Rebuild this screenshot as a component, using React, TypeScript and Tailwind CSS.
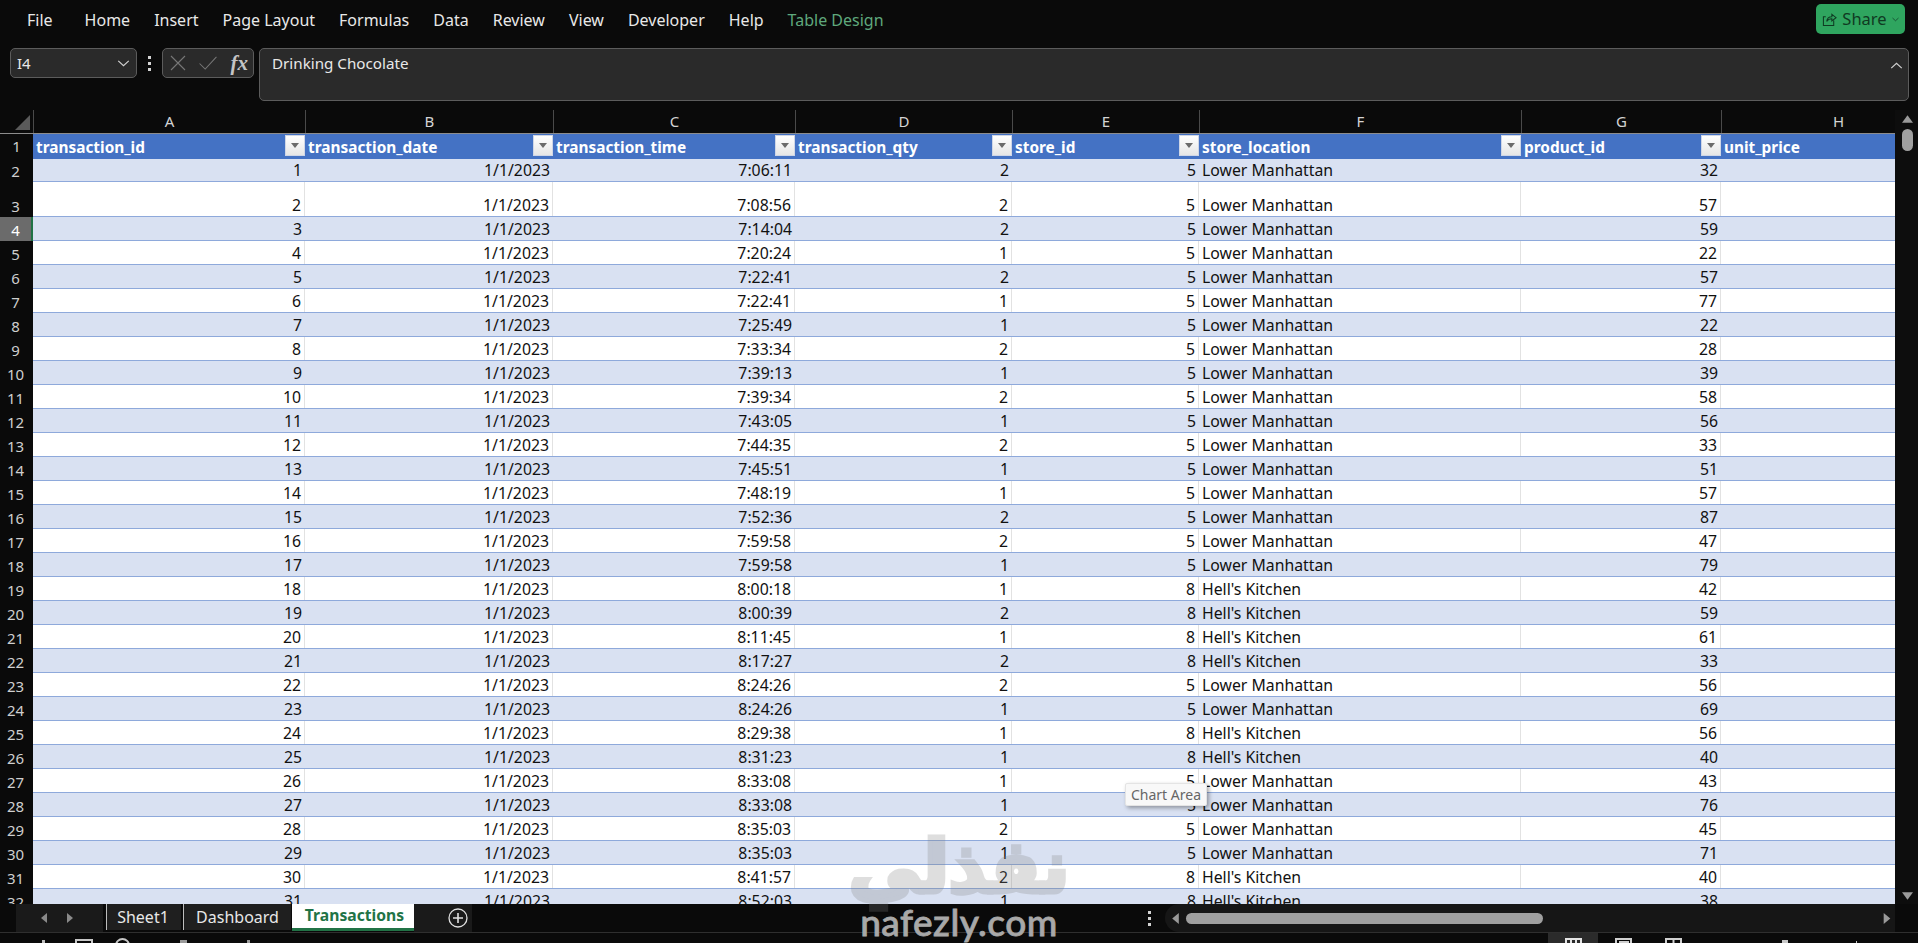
import React from "react";

type Row = [number, string, number, number, string, number];
const L = "Lower Manhattan";
const H = "Hell's Kitchen";
const data: Row[] = [
  [1, "7:06:11", 2, 5, L, 32],
  [2, "7:08:56", 2, 5, L, 57],
  [3, "7:14:04", 2, 5, L, 59],
  [4, "7:20:24", 1, 5, L, 22],
  [5, "7:22:41", 2, 5, L, 57],
  [6, "7:22:41", 1, 5, L, 77],
  [7, "7:25:49", 1, 5, L, 22],
  [8, "7:33:34", 2, 5, L, 28],
  [9, "7:39:13", 1, 5, L, 39],
  [10, "7:39:34", 2, 5, L, 58],
  [11, "7:43:05", 1, 5, L, 56],
  [12, "7:44:35", 2, 5, L, 33],
  [13, "7:45:51", 1, 5, L, 51],
  [14, "7:48:19", 1, 5, L, 57],
  [15, "7:52:36", 2, 5, L, 87],
  [16, "7:59:58", 2, 5, L, 47],
  [17, "7:59:58", 1, 5, L, 79],
  [18, "8:00:18", 1, 8, H, 42],
  [19, "8:00:39", 2, 8, H, 59],
  [20, "8:11:45", 1, 8, H, 61],
  [21, "8:17:27", 2, 8, H, 33],
  [22, "8:24:26", 2, 5, L, 56],
  [23, "8:24:26", 1, 5, L, 69],
  [24, "8:29:38", 1, 8, H, 56],
  [25, "8:31:23", 1, 8, H, 40],
  [26, "8:33:08", 1, 5, L, 43],
  [27, "8:33:08", 1, 5, L, 76],
  [28, "8:35:03", 2, 5, L, 45],
  [29, "8:35:03", 1, 5, L, 71],
  [30, "8:41:57", 2, 8, H, 40],
  [31, "8:52:03", 1, 8, H, 38],
];

const gridCols = "grid grid-cols-[33px_272px_248px_242px_217px_187px_322px_200px_174px]";
const menu = ["Home", "Insert", "Page Layout", "Formulas", "Data", "Review", "View", "Developer", "Help"];
const letters = ["A", "B", "C", "D", "E", "F", "G", "H"];
const heads = ["transaction_id", "transaction_date", "transaction_time", "transaction_qty", "store_id", "store_location", "product_id", "unit_price"];

function Chevron({ className }: { className?: string }) {
  return (
    <svg viewBox="0 0 14 8" className={className} fill="none" stroke="currentColor" strokeWidth="1.4">
      <path d="M1 1l6 5.5L13 1" />
    </svg>
  );
}

function Dots() {
  return (
    <div className="flex flex-col gap-[3px]">
      <div className="w-[3px] h-[3px] bg-[#d4d4d4]" />
      <div className="w-[3px] h-[3px] bg-[#d4d4d4]" />
      <div className="w-[3px] h-[3px] bg-[#d4d4d4]" />
    </div>
  );
}

function Filter() {
  return (
    <div className="absolute right-0 top-[1px] w-[20px] h-[21px] bg-gradient-to-b from-white to-[#e6e6e6] border border-[#cfd6e6] flex items-center justify-center">
      <svg viewBox="0 0 8 5" className="w-[8px] h-[5px]"><path d="M0 0h8L4 5z" fill="#6b6b6b" /></svg>
    </div>
  );
}

function Num({ v, sep }: { v: React.ReactNode; sep: boolean }) {
  return (
    <div className={`flex items-end justify-end pr-[3px] overflow-hidden ${sep ? "border-r border-[#e2e2e2]" : ""}`}>{v}</div>
  );
}

function DataRow({ r, idx }: { r: Row; idx: number }) {
  const n = idx + 2;
  const striped = idx % 2 === 0;
  const tall = n === 3;
  const selected = n === 4;
  return (
    <div className={`${gridCols} ${tall ? "h-[35px]" : "h-[24px]"} shrink-0`}>
      <div className={`flex items-end justify-center text-[15px] leading-[22px] border-r-2 ${selected ? "bg-[#6b6b6b] text-white border-[#217346]" : "bg-[#0a0a0a] text-[#cfcfcf] border-[#0a0a0a]"}`}>
        {n}
      </div>
      <div className={`col-span-8 grid grid-cols-subgrid border-b leading-[21px] ${striped ? "bg-[#d9e1f2]" : "bg-white"} border-[#8ea9db] text-[#111]`}>
        <Num v={r[0]} sep={!striped} />
        <Num v="1/1/2023" sep={!striped} />
        <Num v={r[1]} sep={!striped} />
        <Num v={r[2]} sep={!striped} />
        <Num v={r[3]} sep={!striped} />
        <div className={`flex items-end pl-[3px] ${striped ? "" : "border-r border-[#e2e2e2]"}`}>{r[4]}</div>
        <Num v={r[5]} sep={!striped} />
        <div />
      </div>
    </div>
  );
}

export default function App() {
  return (
    <div className="relative w-[1918px] h-[943px] overflow-hidden bg-[#0a0a0a] flex flex-col font-['Noto_Sans',sans-serif] text-[#e8e8e8]">
      {/* menu */}
      <div className="h-[48px] shrink-0 flex items-start justify-between pl-[27px] pr-[13px]">
        <div className="flex items-center h-[40px] text-[16px] gap-6">
          <span className="mr-2">File</span>
          {menu.map((m) => <span key={m}>{m}</span>)}
          <span className="text-[#5fa87c]">Table Design</span>
        </div>
        <div className="mt-[4px] w-[89px] h-[30px] rounded-[5px] bg-[#2fa55f] flex items-center justify-center gap-[5px] text-[#0f3a22] text-[16.5px]">
          <svg viewBox="0 0 16 16" className="w-[15px] h-[15px] shrink-0" fill="none" stroke="currentColor" strokeWidth="1.1">
            <path d="M4 5H1.5v9.5h11V9M5 10c.4-3.2 2.4-5 5.5-5V2.5L15 6l-4.5 3.5V7.2C8 7.2 6.3 8 5 10z" />
          </svg>
          <span>Share</span>
          <Chevron className="w-[7px] h-[5px] shrink-0" />
        </div>
      </div>

      {/* formula bar */}
      <div className="h-[62px] shrink-0 flex items-start pl-[10px] pr-[9px]">
        <div className="w-[127px] h-[30px] rounded-[5px] border border-[#5c5c5c] bg-[#2a2a2a] flex items-center justify-between pl-[6px] pr-[6px] text-[15px]">
          <span>I4</span>
          <Chevron className="w-[13px] h-[7px] text-[#d0d0d0]" />
        </div>
        <div className="w-[25px] h-[30px] flex items-center justify-center"><Dots /></div>
        <div className="w-[92px] h-[30px] rounded-[5px] border border-[#5c5c5c] bg-[#2a2a2a] flex items-center pl-[7px] pr-[5px] justify-between">
          <svg viewBox="0 0 16 16" className="w-[16px] h-[16px]" fill="none" stroke="#777" strokeWidth="1.1"><path d="M1 1l14 14M15 1L1 15" /></svg>
          <svg viewBox="0 0 20 16" className="w-[20px] h-[15px]" fill="none" stroke="#777" strokeWidth="1.1"><path d="M1 8l6 6L19 1" /></svg>
          <span className="font-['Liberation_Serif',serif] italic font-bold text-[21px] text-[#c4c4c4] leading-none">fx</span>
        </div>
        <div className="ml-[5px] flex-1 h-[53px] rounded-[5px] border border-[#5c5c5c] bg-[#2a2a2a] flex items-start justify-between pl-[12px] pr-[5px] pt-[3px] text-[15.2px]">
          <span>Drinking Chocolate</span>
          <Chevron className="mt-[10px] w-[13px] h-[7px] rotate-180 text-[#d0d0d0]" />
        </div>
      </div>

      {/* sheet */}
      <div className="h-[794px] shrink-0 flex overflow-hidden text-[15.8px]">
        <div className="w-[1895px] flex flex-col overflow-hidden">
          <div className={`${gridCols} h-[24px] shrink-0 border-b border-[#8c8c8c] text-[#d4d4d4] text-[15px]`}>
            <div className="flex items-end justify-end pr-[3px] pb-[3px]">
              <svg viewBox="0 0 16 16" className="w-[15px] h-[15px]"><path d="M16 0v16H0z" fill="#5a5a5a" /></svg>
            </div>
            {letters.map((c) => (
              <div key={c} className={`flex items-center justify-center border-l border-[#4a4a4a] ${c === "H" ? "pl-[60px]" : ""}`}>{c}</div>
            ))}
          </div>
          <div className={`${gridCols} h-[24px] shrink-0`}>
            <div className="flex items-center justify-center text-[15px] text-[#cfcfcf]">1</div>
            {heads.map((h, i) => (
              <div key={h} className="relative flex items-center pl-[3px] pt-[2px] bg-[#4472c4] text-white font-bold text-[15.4px] whitespace-nowrap">
                {h}
                {i < 7 && <Filter />}
              </div>
            ))}
          </div>
          {data.map((r, i) => <DataRow key={r[0]} r={r} idx={i} />)}
        </div>
        <div className="w-[23px] flex flex-col items-center pt-[5px] pl-[1px] bg-[#0d0d0d]">
          <svg viewBox="0 0 12 8" className="w-[11px] h-[8px] shrink-0"><path d="M6 0l6 8H0z" fill="#9a9a9a" /></svg>
          <div className="mt-[6px] w-[11px] h-[22px] rounded-full bg-[#a0a0a0] shrink-0" />
          <div className="flex-1" />
          <svg viewBox="0 0 12 8" className="w-[11px] h-[8px] shrink-0 mb-[4px]"><path d="M6 8L0 0h12z" fill="#9a9a9a" /></svg>
        </div>
      </div>

      {/* tabs */}
      <div className="h-[29px] shrink-0 flex items-start text-[16px] border-b border-[#2f2f2f]">
        <div className="ml-[16px] w-[87px] h-[28px] bg-[#1a1a1a] flex items-center gap-[20px] pl-[25px]">
          <svg viewBox="0 0 6 10" className="w-[6px] h-[10px]"><path d="M6 0v10L0 5z" fill="#8a8a8a" /></svg>
          <svg viewBox="0 0 6 10" className="w-[6px] h-[10px]"><path d="M0 0v10l6-5z" fill="#8a8a8a" /></svg>
        </div>
        <div className="ml-[3px] w-[75px] h-[26px] bg-[#1f1f1f] border-l border-[#bdbdbd] flex items-center justify-center pr-[2px]">Sheet1</div>
        <div className="ml-[2px] w-[108px] h-[26px] bg-[#1f1f1f] border-l border-[#bdbdbd] flex items-center justify-center">Dashboard</div>
        <div className="ml-[1px] w-[122px] h-[27px] bg-white border-b-[3px] border-[#217346] flex items-center justify-center pl-[3px] font-bold text-[15.7px] text-[#217346]">Transactions</div>
        <div className="w-[58px] h-[28px] bg-[#1a1a1a] flex items-center justify-end pr-[4px]">
          <svg viewBox="0 0 20 20" className="w-[20px] h-[20px]" fill="none" stroke="#e0e0e0" strokeWidth="1.3">
            <circle cx="10" cy="10" r="9" />
            <path d="M10 5v10M5 10h10" strokeWidth="1.6" />
          </svg>
        </div>
        <div className="ml-[669px] w-[17px] h-[28px] flex items-center justify-center"><Dots /></div>
        <div className="ml-[7px] flex-1 h-[28px] mr-[23px] flex items-center bg-[#161616] rounded-l-full pl-[7px] pr-[4px]">
          <svg viewBox="0 0 6 10" className="w-[7px] h-[11px] shrink-0"><path d="M6 0v10L0 5z" fill="#9a9a9a" /></svg>
          <div className="ml-[7px] w-[357px] h-[11px] rounded-full bg-[#a0a0a0]" />
          <div className="flex-1" />
          <svg viewBox="0 0 6 10" className="w-[8px] h-[11px] shrink-0"><path d="M0 0v10l6-5z" fill="#9a9a9a" /></svg>
        </div>
      </div>

      {/* status bar (cut by the window edge) */}
      <div className="flex-1 overflow-hidden flex items-start pl-[42px]">
        <div className="mt-[7px] w-[3px] h-[3px] bg-[#bdbdbd]" />
        <div className="ml-[30px] mt-[6px] w-[18px] h-[10px] border-t-2 border-x-2 border-[#c8c8c8]" />
        <div className="ml-[22px] mt-[5px] w-[15px] h-[10px] rounded-t-full border-2 border-[#c8c8c8]" />
        <div className="ml-[50px] mt-[7px] w-[7px] h-[3px] bg-[#9a9a9a]" />
        <div className="ml-[60px] mt-[7px] w-[3px] h-[3px] bg-[#9a9a9a]" />
        <div className="ml-[1298px] w-[50px] h-[10px] bg-[#2b2b2b] flex justify-center pt-[5px]">
          <svg viewBox="0 0 17 5" className="w-[17px] h-[5px]" fill="none" stroke="#e4e4e4" strokeWidth="2"><path d="M1 5V1h15v4M6 1v4M11 1v4" /></svg>
        </div>
        <svg viewBox="0 0 17 5" className="ml-[17px] mt-[5px] w-[17px] h-[5px]" fill="none" stroke="#d0d0d0" strokeWidth="2"><path d="M1 5V1h15v4M4 4h9v1" /></svg>
        <svg viewBox="0 0 17 5" className="ml-[33px] mt-[5px] w-[17px] h-[5px]" fill="none" stroke="#d0d0d0" strokeWidth="2"><path d="M1 5V1h15v4M8.5 1v4" /></svg>
        <div className="ml-[100px] mt-[7px] w-[6px] h-[6px] bg-[#c8c8c8]" />
        <div className="ml-[68px] mt-[8px] w-[1px] h-[4px] bg-[#c8c8c8]" />
      </div>

      {/* tooltip */}
      <div className="absolute left-[1125px] top-[783px] w-[82px] h-[23px] bg-[#f8f8f8] rounded-[2px] shadow-[2px_2px_4px_rgba(0,0,0,0.35)] border border-[#e4e4e4] flex items-center justify-center text-[14px] text-[#666]">
        Chart Area
      </div>

      {/* watermark */}
      <div className="absolute left-[853px] top-[820px] w-[212px] flex flex-col items-center pointer-events-none">
        <span dir="rtl" className="relative top-[5px] font-['DejaVu_Sans',sans-serif] font-bold text-[72px] leading-[84px] text-[#7f7f7f] opacity-25 [-webkit-text-stroke:5px_#7f7f7f]">نفذلي</span>
        <span className="font-['Lato',sans-serif] text-[37px] leading-[36px] font-medium tracking-[0.5px] text-[#a8a8a8] [-webkit-text-stroke:0.8px_#a8a8a8]">nafezly.com</span>
      </div>
    </div>
  );
}
